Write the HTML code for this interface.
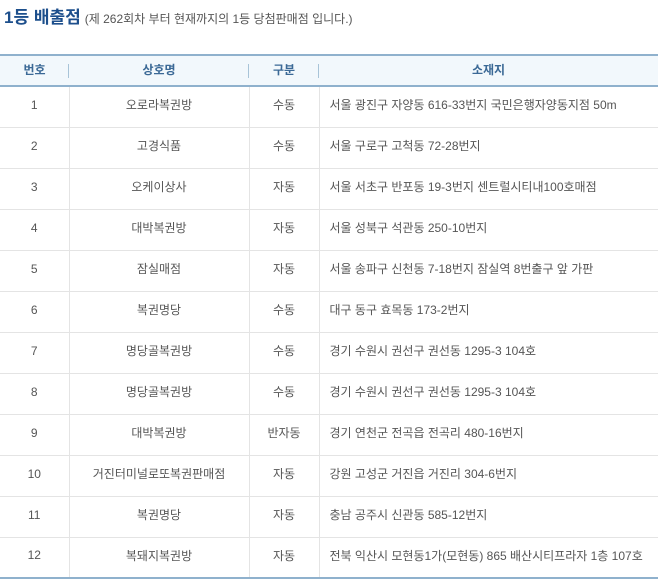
<!DOCTYPE html>
<html><head><meta charset="utf-8"><style>
body{margin:0;width:658px;height:583px;background:#fff;font-family:"Liberation Sans","Noto Sans CJK KR","NanumGothic",sans-serif;overflow:hidden;position:relative}
.t{position:absolute;left:4px;top:3px;font-size:17px;font-weight:bold;color:#1d4f8c;white-space:nowrap}
.t span{font-size:12px;font-weight:normal;color:#555;margin-left:4px}
table{position:absolute;left:0;top:54px;width:658px;border-collapse:collapse;font-size:12px;color:#555}
th{height:27px;background:#f2f8fc;color:#3b6996;font-weight:bold;border-top:2px solid #8fb1cd;border-bottom:2px solid #8fb1cd;position:relative;padding:0 0 2px}
th .d{position:absolute;right:0;top:8px;height:14px;border-right:1px solid #a8c4d8}
td{border-bottom:1px solid #e4e4e4;text-align:center;padding:0 0 4px;border-right:1px solid #e4e4e4;box-sizing:border-box}
tr td{height:41px}
td:last-child{border-right:none;text-align:left;padding-left:10px}
tr:last-child td{border-bottom:2px solid #8fb1cd}
</style></head><body>
<div class="t">1등 배출점<span>(제 262회차 부터 현재까지의 1등 당첨판매점 입니다.)</span></div>
<table>
<colgroup><col style="width:69px"><col style="width:180px"><col style="width:70px"><col></colgroup>
<tr><th>번호<i class="d"></i></th><th>상호명<i class="d"></i></th><th>구분<i class="d"></i></th><th>소재지</th></tr>
<tr><td>1</td><td>오로라복권방</td><td>수동</td><td>서울 광진구 자양동 616-33번지 국민은행자양동지점 50m</td></tr>
<tr><td>2</td><td>고경식품</td><td>수동</td><td>서울 구로구 고척동 72-28번지</td></tr>
<tr><td>3</td><td>오케이상사</td><td>자동</td><td>서울 서초구 반포동 19-3번지 센트럴시티내100호매점</td></tr>
<tr><td>4</td><td>대박복권방</td><td>자동</td><td>서울 성북구 석관동 250-10번지</td></tr>
<tr><td>5</td><td>잠실매점</td><td>자동</td><td>서울 송파구 신천동 7-18번지 잠실역 8번출구 앞 가판</td></tr>
<tr><td>6</td><td>복권명당</td><td>수동</td><td>대구 동구 효목동 173-2번지</td></tr>
<tr><td>7</td><td>명당골복권방</td><td>수동</td><td>경기 수원시 권선구 권선동 1295-3 104호</td></tr>
<tr><td>8</td><td>명당골복권방</td><td>수동</td><td>경기 수원시 권선구 권선동 1295-3 104호</td></tr>
<tr><td>9</td><td>대박복권방</td><td>반자동</td><td>경기 연천군 전곡읍 전곡리 480-16번지</td></tr>
<tr><td>10</td><td>거진터미널로또복권판매점</td><td>자동</td><td>강원 고성군 거진읍 거진리 304-6번지</td></tr>
<tr><td>11</td><td>복권명당</td><td>자동</td><td>충남 공주시 신관동 585-12번지</td></tr>
<tr><td>12</td><td>복돼지복권방</td><td>자동</td><td>전북 익산시 모현동1가(모현동) 865 배산시티프라자 1층 107호</td></tr>
</table>
</body></html>
